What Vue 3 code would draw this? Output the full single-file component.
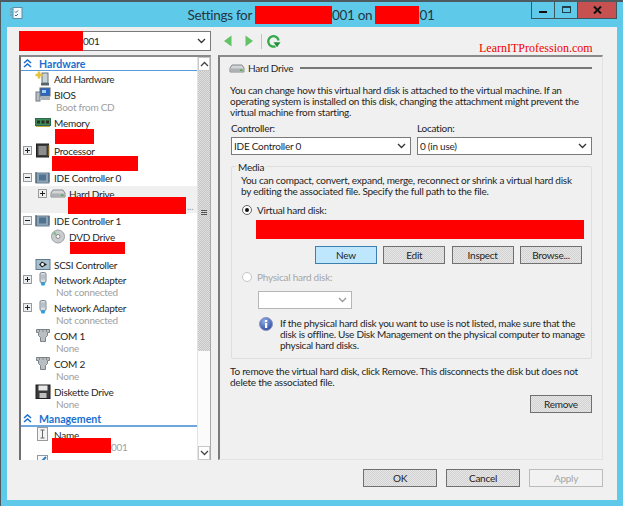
<script setup>
const rows = [
  { head: 'Hardware', h: 14 },
  { icon: 'add', label: 'Add Hardware', h: 16 },
  { icon: 'bios', label: 'BIOS', sub: 'Boot from CD', h: 28 },
  { icon: 'mem', label: 'Memory', h: 28 },
  { icon: 'cpu', label: 'Processor', exp: '+', h: 27 },
  { icon: 'ide', label: 'IDE Controller 0', exp: '-', h: 16 },
  { icon: 'hdd', label: 'Hard Drive', exp: '+', level: 1, h: 27, sel: true, sub: '...', subAt: 166 },
  { icon: 'ide', label: 'IDE Controller 1', exp: '-', h: 16 },
  { icon: 'dvd', label: 'DVD Drive', level: 1, noExp: true, h: 28 },
  { icon: 'scsi', label: 'SCSI Controller', h: 15 },
  { icon: 'net', label: 'Network Adapter', exp: '+', sub: 'Not connected', h: 28 },
  { icon: 'net', label: 'Network Adapter', exp: '+', sub: 'Not connected', h: 28 },
  { icon: 'com', label: 'COM 1', sub: 'None', h: 28 },
  { icon: 'com', label: 'COM 2', sub: 'None', h: 28 },
  { icon: 'disk', label: 'Diskette Drive', sub: 'None', h: 28 },
  { head: 'Management', h: 15, strong: true },
  { icon: 'name', label: 'Name', sub: '001', subAt: 90, h: 28 },
  { icon: 'info2', label: 'Integration Services', h: 16 }
]
const redactions = [
  { l: 34, t: 72, w: 39, h: 15 },
  { l: 31, t: 99, w: 86, h: 15 },
  { l: 47, t: 140, w: 118, h: 17 },
  { l: 49, t: 185, w: 55, h: 12 },
  { l: 31, t: 381, w: 59, h: 15 }
]
const rowStyle = (r) => ({ height: r.h + 'px' })
const redactStyle = (r) => ({ left: r.l + 'px', top: r.t + 'px', width: r.w + 'px', height: r.h + 'px' })
</script>

<template>
  <div class="window">
    <header class="titlebar">
      <svg class="appicon" width="14" height="14" viewBox="0 0 14 14"><rect x="4" y="1.5" width="9" height="11" fill="#f4f8fa" stroke="#5d8ea3" /><path d="M6 5.5l1 1 2-2M6 9l1 1 2-2" stroke="#2b6d8c" fill="none" /><path d="M1 3h2M1 6h2M1 9h2" stroke="#7aa6b8" stroke-width="2" /></svg>
      <div class="title">Settings for <span class="red tblock a"></span>001 on <span class="red tblock b"></span>01</div>
      <div class="controls">
        <div class="ctl"><span class="min"></span></div>
        <div class="ctl"><span class="max"></span></div>
        <div class="ctl close">
          <svg width="9" height="8" viewBox="0 0 9 8"><path d="M1 0.5l7 7M8 0.5l-7 7" stroke="#111" stroke-width="2" /></svg>
        </div>
      </div>
    </header>

    <div class="watermark">LearnITProfession.com</div>

    <main class="body">
      <div class="combo vm">
        <span class="red vmred"></span><span class="vmtext">001</span>
        <svg class="chev" width="9" height="6" viewBox="0 0 9 6"><path d="M1 1l3.5 3.5L8 1" stroke="#333" stroke-width="1.3" fill="none" /></svg>
      </div>

      <div class="toolbar">
        <svg width="10" height="12" viewBox="0 0 10 12"><path d="M8.5 0.500v11L1 6z" fill="#62c266" /></svg>
        <svg class="fwd" width="10" height="12" viewBox="0 0 10 12"><path d="M1.500 0.500v11L9 6z" fill="#62c266" /></svg>
        <span class="tsep"></span>
        <svg width="15" height="15" viewBox="0 0 15 15"><path d="M9.500 12.200A5.200 5.200 0 1 1 12.600 6.500" fill="none" stroke="#36a94a" stroke-width="2.300" /><path d="M7.500 8.200h7l-3.500 5z" fill="#1f8f3a" /></svg>
      </div>

      <section class="tree">
        <div class="treelist">
          <template v-for="(r, i) in rows" :key="i">
            <div v-if="r.head" class="head" :class="{ strong: r.strong }" :style="rowStyle(r)">
              <svg width="9" height="9" viewBox="0 0 9 9"><path d="M1 4l3.500-3L8 4M1 8l3.500-3L8 8" fill="none" stroke="#1a6fd0" stroke-width="1.600" /></svg>
              <span>{{ r.head }}</span>
            </div>
            <div v-else class="row" :class="{ sel: r.sel, lvl1: r.level === 1 }" :style="rowStyle(r)">
              <div class="main">
                <span class="exp" :class="{ none: !r.exp }">
                  <template v-if="r.exp">
                    <i class="hbar"></i><i v-if="r.exp === '+'" class="vbar"></i>
                  </template>
                </span>
                <svg class="ico" width="16" height="15" viewBox="0 0 16 15"><use :href="'#i-' + r.icon" /></svg>
                <span class="label">{{ r.label }}</span>
              </div>
              <div v-if="r.sub" class="sub" :style="r.subAt ? { paddingLeft: r.subAt + 'px' } : null">{{ r.sub }}</div>
            </div>
          </template>
        </div>

        <div class="scroll">
          <div class="sbtn"><svg width="9" height="6" viewBox="0 0 9 6"><path d="M1 5l3.500-3.500L8 5" stroke="#444" stroke-width="1.300" fill="none" /></svg></div>
          <div class="thumb"><i></i><i></i><i></i></div>
          <div class="strack"></div>
          <div class="sbtn"><svg width="9" height="6" viewBox="0 0 9 6"><path d="M1 1l3.500 3.500L8 1" stroke="#444" stroke-width="1.300" fill="none" /></svg></div>
        </div>

        <div v-for="(r, i) in redactions" :key="'r' + i" class="red over" :style="redactStyle(r)"></div>
      </section>

      <section class="panel">
        <div class="phead">
          <svg width="16" height="15" viewBox="0 0 16 15"><use href="#i-hdd" /></svg>
          <span>Hard Drive</span>
          <i class="rule"></i>
        </div>
        <p class="para first">You can change how this virtual hard disk is attached to the virtual machine. If an operating system is installed on this disk, changing the attachment might prevent the virtual machine from starting.</p>

        <div class="pair">
          <div class="field ctrl">
            <label>Controller:</label>
            <div class="combo small"><span>IDE Controller 0</span><svg class="chev" width="9" height="6" viewBox="0 0 9 6"><path d="M1 1l3.500 3.500L8 1" stroke="#333" stroke-width="1.300" fill="none" /></svg></div>
          </div>
          <div class="field loc">
            <label>Location:</label>
            <div class="combo small"><span>0 (in use)</span><svg class="chev" width="9" height="6" viewBox="0 0 9 6"><path d="M1 1l3.500 3.500L8 1" stroke="#333" stroke-width="1.300" fill="none" /></svg></div>
          </div>
        </div>

        <div class="media">
          <span class="legend">Media</span>
          <p class="para mtext">You can compact, convert, expand, merge, reconnect or shrink a virtual hard disk by editing the associated file. Specify the full path to the file.</p>
          <div class="radio"><span class="dot on"></span><span>Virtual hard disk:</span></div>
          <div class="red path"></div>
          <div class="btns">
            <button class="btn focus">New</button>
            <button class="btn">Edit</button>
            <button class="btn">Inspect</button>
            <button class="btn">Browse...</button>
          </div>
          <div class="radio off"><span class="dot"></span><span>Physical hard disk:</span></div>
          <div class="combo phys"><svg class="chev" width="9" height="6" viewBox="0 0 9 6"><path d="M1 1l3.500 3.500L8 1" stroke="#999" stroke-width="1.300" fill="none" /></svg></div>
          <div class="note">
            <svg width="14" height="14" viewBox="0 0 14 14"><defs><radialGradient id="ig" cx="0.4" cy="0.3" r="0.8"><stop offset="0" stop-color="#8fb0ea" /><stop offset="1" stop-color="#27419e" /></radialGradient></defs><circle cx="7" cy="7" r="6.500" fill="url(#ig)" stroke="#8d97b8" /><rect x="6" y="6" width="2.200" height="5" fill="#fff" /><rect x="6" y="3" width="2.200" height="2" fill="#fff" /></svg>
            <p class="para">If the physical hard disk you want to use is not listed, make sure that the disk is offline. Use Disk Management on the physical computer to manage physical hard disks.</p>
          </div>
        </div>

        <p class="para remove">To remove the virtual hard disk, click Remove. This disconnects the disk but does not delete the associated file.</p>
        <div class="rmrow"><button class="btn">Remove</button></div>
      </section>

      <footer class="foot">
        <button class="btn wide">OK</button>
        <button class="btn wide">Cancel</button>
        <button class="btn wide dis">Apply</button>
      </footer>
    </main>

    <svg class="defs" width="0" height="0">
      <symbol id="i-add" viewBox="0 0 16 15"><rect x="7" y="2" width="6" height="10" fill="#c9d2d6" stroke="#66757c" /><rect x="6" y="12" width="8" height="2.500" fill="#57646a" /><path d="M4 0.500v7M0.500 4h7" stroke="#e8c23c" stroke-width="2.600" /></symbol>
      <symbol id="i-bios" viewBox="0 0 16 15"><rect x="5" y="1" width="10" height="8" fill="#2a63c4" stroke="#5c6a72" /><rect x="7" y="3" width="4" height="3" fill="#9fd0f4" /><rect x="1" y="5" width="4" height="9" fill="#b6bec4" stroke="#6f7b82" /><rect x="6" y="10" width="9" height="3" fill="#aab2b8" /></symbol>
      <symbol id="i-mem" viewBox="0 0 16 15"><rect x="0.500" y="3.500" width="15" height="7" fill="#3c8a5a" stroke="#2c6a50" /><path d="M2 5.500h3v3H2zM6.500 5.500h3v3h-3zM11 5.500h3v3h-3z" fill="#2a2f22" /><path d="M1 11.500h14" stroke="#c2a83a" /></symbol>
      <symbol id="i-cpu" viewBox="0 0 16 15"><rect x="1.500" y="1" width="12" height="13" fill="#3c3c3c" stroke="#1f1f1f" /><rect x="3.500" y="3" width="8" height="9" fill="#8d8d8d" /><path d="M14 2v11" stroke="#d9a33a" /></symbol>
      <symbol id="i-ide" viewBox="0 0 16 15"><rect x="1" y="3" width="13" height="10" fill="#8da3b4" stroke="#6a8294" /><rect x="4" y="4.500" width="7" height="6" fill="#4f7290" /><path d="M1 2v11M14 3v9" stroke="#3f5a6e" /></symbol>
      <symbol id="i-hdd" viewBox="0 0 16 15"><path d="M3 4h10l2 3v4H1V7z" fill="#d2d4d6" stroke="#85898c" /><rect x="1.500" y="7.500" width="13" height="3" fill="#aeb1b3" /><rect x="11" y="8.500" width="2.500" height="1.500" fill="#46b04a" /></symbol>
      <symbol id="i-dvd" viewBox="0 0 16 15"><circle cx="8" cy="7.500" r="6.500" fill="#c9cdd0" stroke="#9a9ea2" /><path d="M3 5l4 2-2-5z" fill="#7fbf86" /><circle cx="8" cy="7.500" r="2" fill="#fff" stroke="#888" /></symbol>
      <symbol id="i-scsi" viewBox="0 0 16 15"><rect x="1" y="2.500" width="14" height="10" fill="#a9c0d0" stroke="#5e7a8c" /><path d="M4 7.500l3-3 5 3-5 3z" fill="#222" /><circle cx="7.500" cy="7.500" r="1.400" fill="#fff" /></symbol>
      <symbol id="i-net" viewBox="0 0 16 15"><rect x="5" y="0.500" width="6" height="10" rx="1.500" fill="#d6dce0" stroke="#7c8890" /><path d="M7 2.500v5M9 2.500v5" stroke="#9aa6ae" /><path d="M5.500 10.500h5l-1 3h-3z" fill="#2f9fdb" /></symbol>
      <symbol id="i-com" viewBox="0 0 16 15"><path d="M1.500 1.500h13v3h-2v3l-2 2v4h-5v-4l-2-2v-3h-2z" fill="#b8bec2" stroke="#7a8388" /><path d="M4 3h1M7.500 3h1M11 3h1" stroke="#555" /></symbol>
      <symbol id="i-disk" viewBox="0 0 16 15"><rect x="1" y="1" width="14" height="13.500" fill="#3a3a3a" stroke="#1f1f1f" /><rect x="3.500" y="1.500" width="9" height="5" fill="#e8e8e8" /><rect x="4.500" y="9" width="7" height="5" fill="#bdbdbd" /></symbol>
      <symbol id="i-name" viewBox="0 0 16 15"><rect x="2.500" y="0.500" width="10" height="13" fill="#f4f4f4" stroke="#9a9a9a" /><path d="M5.500 3h4M7.500 3v8M5.500 11h4" stroke="#666" fill="none" /></symbol>
      <symbol id="i-info2" viewBox="0 0 16 15"><rect x="2.500" y="0.500" width="10" height="13" fill="#f8f8f8" stroke="#8a9ba8" /><path d="M6 7l5-5" stroke="#2b7fc4" stroke-width="2" /></symbol>
    </svg>
  </div>
</template>

<style>
html, body { margin: 0; padding: 0; }
</style>

<style scoped>
* { box-sizing: border-box; }
.window {
  position: relative;
  width: 623px;
  height: 506px;
  overflow: hidden;
  background: #5fc9ea;
  border-top: 2px solid #4d5a60;
  border-left: 1px solid #4d5a60;
  padding: 0 6px 6px 6px;
  font-family: Lato, "Noto Sans", sans-serif;
  font-size: 10px;
  letter-spacing: -0.25px;
  color: #1f1f1f;
}
.defs { position: absolute; }
.red { background: #fe0000; }
.titlebar {
  position: relative;
  height: 25px;
  display: flex;
  align-items: center;
  justify-content: center;
}
.appicon { position: absolute; left: 2px; top: 4px; }
.title {
  font-size: 13.5px;
  letter-spacing: -0.3px;
  color: #243640;
  white-space: nowrap;
  margin-right: 2px;
  line-height: 18px;
}
.tblock { display: inline-block; height: 18px; vertical-align: top; }
.tblock.a { width: 77px; }
.tblock.b { width: 44px; }
.controls {
  position: absolute;
  right: 0;
  top: 0;
  display: flex;
  height: 17px;
  border: 1px solid #3e5660;
  border-top: 0;
}
.ctl {
  width: 23px;
  display: flex;
  align-items: center;
  justify-content: center;
  border-right: 1px solid #3e5660;
}
.ctl.close { width: 38px; background: #c75050; border-right: 0; }
.min { width: 8px; height: 2px; background: #111; margin-top: 4px; }
.max { width: 9px; height: 7px; border: 1px solid #22404c; border-top-width: 2px; margin-top: -2px; }
.watermark {
  position: absolute;
  left: 478px;
  top: 39px;
  font-family: "Liberation Serif", serif;
  font-size: 12px;
  letter-spacing: 0;
  color: #f00000;
  z-index: 2;
}
.body {
  width: 610px;
  height: 473px;
  background: #f0f0f0;
  padding: 4px 0 0 12px;
  display: grid;
  grid-template-columns: 192px 385px;
  grid-template-rows: 20px 405px auto;
  column-gap: 7px;
  row-gap: 4px;
}
.combo {
  position: relative;
  display: flex;
  align-items: center;
  background: #fff;
  border: 1px solid #7a7a7a;
  padding-left: 2px;
}
.vmred { width: 64px; height: 20px; margin: -1px 0 -1px -3px; }
.chev { position: absolute; right: 4px; top: 50%; margin-top: -3px; }
.toolbar {
  display: flex;
  align-items: center;
  padding-left: 5px;
}
.fwd { margin-left: 11px; }
.tsep { width: 1px; height: 15px; background: #c4c4c4; margin: 0 4px 0 7px; }
.tree {
  position: relative;
  display: flex;
  background: #fff;
  border-top: 2px solid #8a8a8a;
  border-left: 2px solid #6f6f6f;
  border-right: 1px solid #a8a8a8;
  overflow: hidden;
}
.treelist { width: 176px; overflow: hidden; flex: none; }
.head {
  display: flex;
  align-items: center;
  gap: 7px;
  padding-left: 2px;
  border-bottom: 1px solid #5b9bdc;
  font-weight: 700;
  font-size: 10.6px;
  letter-spacing: 0;
  color: #1a6fd0;
}
.head.strong { border-bottom-width: 2px; border-color: #6ea6e0; }
.row { overflow: hidden; }
.row.sel { background: #f0f0f0; }
.main { display: flex; align-items: center; height: 15px; padding-left: 2px; }
.lvl1 .main { padding-left: 17px; }
.exp {
  position: relative;
  flex: none;
  width: 9px;
  height: 9px;
  margin-right: 3px;
  border: 1px solid #9a9a9a;
  background: #eceff2;
}
.exp.none { border: 0; background: none; }
.hbar { position: absolute; left: 1px; top: 3px; width: 5px; height: 1px; background: #222; }
.vbar { position: absolute; left: 3px; top: 1px; width: 1px; height: 5px; background: #222; }
.ico { flex: none; margin-right: 3px; }
.label { white-space: nowrap; }
.sub { padding-left: 35px; margin-top: -1px; color: #a0a0a0; line-height: 12px; white-space: nowrap; }
.scroll {
  width: 13px;
  flex: none;
  display: flex;
  flex-direction: column;
  border-left: 1px solid #e3e3e3;
  background: #fff;
}
.sbtn {
  height: 14px;
  display: flex;
  align-items: center;
  justify-content: center;
  background: #fff;
  border: 1px solid #c8c8c8;
  flex: none;
}
.thumb {
  height: 280px;
  flex: none;
  background: repeating-conic-gradient(#dedede 0 25%, #c6c6c6 0 50%) 0 0 / 2px 2px;
  display: flex;
  flex-direction: column;
  align-items: center;
  justify-content: center;
  gap: 1px;
  padding-top: 2px;
}
.thumb i { width: 6px; height: 1px; background: #555; }
.strack { flex: 1; background: #fbfbfb; }
.over { position: absolute; }
.panel {
  border-top: 2px solid #8a8a8a;
  border-left: 2px solid #7a7a7a;
  border-right: 1px solid #e3e3e3;
  border-bottom: 1px solid #e3e3e3;
  padding: 3px 10px 0 10px;
}
.phead { display: flex; align-items: center; height: 16px; margin-left: -1px; gap: 3px; }
.rule { flex: 1; height: 2px; background: #777; margin-left: 4px; }
.para { margin: 0; line-height: 11px; }
.para.first { margin-top: 9px; }
.mtext { margin-right: 5px; }
.pair { display: flex; margin-top: 4px; gap: 6px; }
.field label { display: block; line-height: 12px; margin-bottom: 3px; }
.ctrl { width: 180px; margin-left: 1px; }
.loc { width: 175px; }
.small { height: 18px; }
.media {
  position: relative;
  margin: 11px 0 0 1px;
  width: 361px;
  height: 193px;
  border: 1px solid #dedede;
  border-radius: 2px;
  padding: 8px 9px 0 9px;
}
.legend {
  position: absolute;
  left: 4px;
  top: -6px;
  padding: 0 2px;
  background: #f0f0f0;
  line-height: 12px;
}
.radio { display: flex; align-items: center; height: 12px; margin-top: 7px; gap: 5px; }
.radio.off { margin-top: 7px; color: #a6a6a6; }
.dot {
  position: relative;
  width: 10px;
  height: 10px;
  margin-left: 1px;
  border-radius: 50%;
  border: 1px solid #c4c4c4;
  background: #fff;
}
.dot.on { border-color: #666; }
.dot.on::after {
  content: "";
  position: absolute;
  left: 2px;
  top: 2px;
  width: 4px;
  height: 4px;
  border-radius: 50%;
  background: #111;
}
.path { margin: 4px 0 0 15px; width: 328px; height: 19px; }
.btns { display: flex; gap: 6.33px; margin: 7px 0 0 74px; }
.btn {
  width: 62px;
  height: 18px;
  padding: 0;
  font: inherit;
  letter-spacing: inherit;
  color: #1f1f1f;
  border: 1px solid #707070;
  background: repeating-conic-gradient(#e6e6e6 0 25%, #d2d2d2 0 50%) 0 0 / 2px 2px;
}
.btn.focus { background: #bee6fd; border-color: #3c7fb1; }
.btn.wide { width: 74px; }
.btn.dis { color: #a6a6a6; border-color: #bcbcbc; background: #f2f2f2; }
.phys {
  width: 94px;
  height: 18px;
  margin: 8px 0 0 17px;
  border-color: #b5b5b5;
}
.note { display: flex; gap: 7px; margin: 9px -5px 0 18px; }
.note svg { flex: none; margin-top: -1px; }
.remove { margin-top: 7px; width: 350px; }
.rmrow { display: flex; justify-content: flex-end; margin: 7px 0 0; width: 362px; }
.foot {
  grid-column: 1 / 3;
  display: flex;
  justify-content: flex-end;
  gap: 9px;
  margin-top: 5px;
}
</style>
